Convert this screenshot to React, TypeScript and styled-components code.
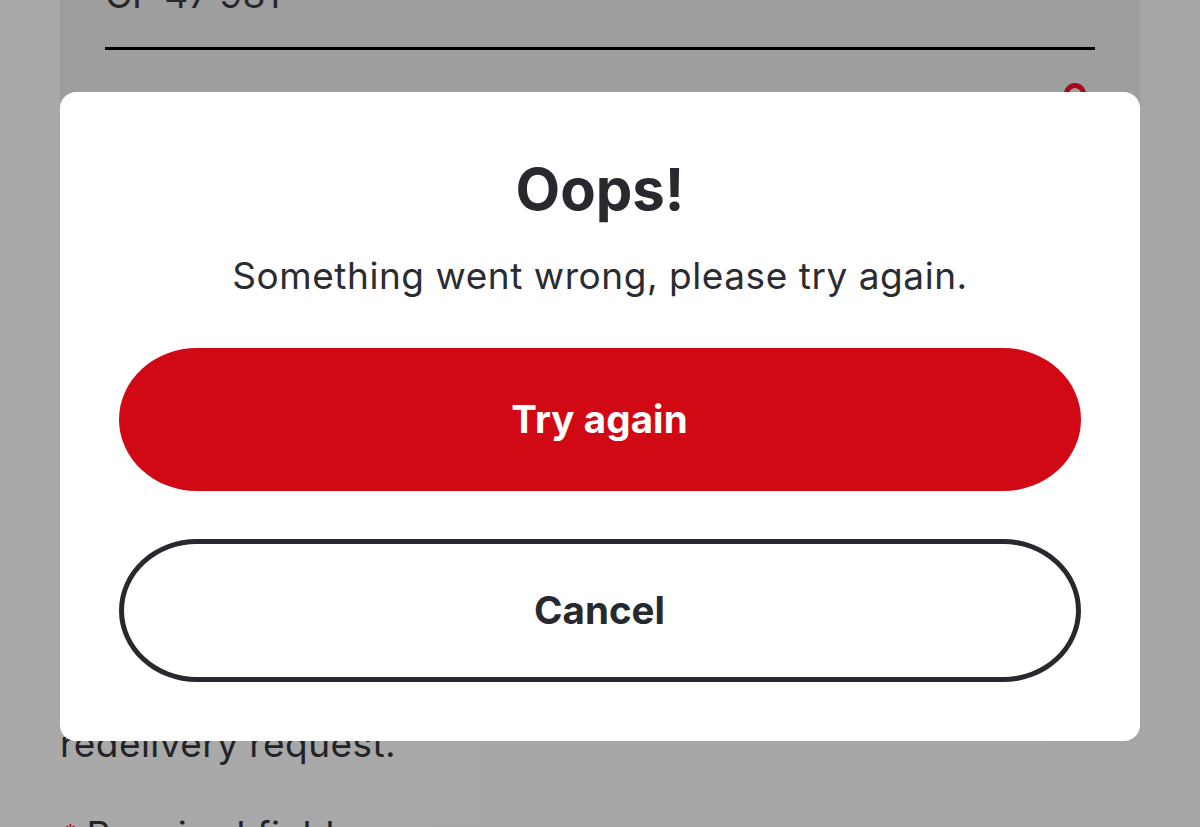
import React from "react";
import styled, { createGlobalStyle } from "styled-components";

const Global = createGlobalStyle`
  html, body { margin: 0; padding: 0; background: #a6a6a6; }
  * { box-sizing: border-box; }
`;

const Page = styled.div`
  position: relative;
  width: 1200px;
  height: 827px;
  overflow: hidden;
  background: linear-gradient(90deg, #a9a9a9 0%, #a6a6a6 100%);
  font-family: Inter, "Liberation Sans", sans-serif;
  color: #26272c;
`;

const Backdrop = styled.div`
  display: flex;
  flex-direction: column;
  margin-top: -30px;
  padding: 0 60px;
`;

const Panel = styled.section`
  height: 750px;
  padding: 0 45px;
  background: #9e9e9e;
`;

const RefNumber = styled.div`
  height: 80px;
  font-size: 37px;
  line-height: 50px;
  color: #27282c;
  border-bottom: 3px solid #000;
`;

const PinRow = styled.div`
  display: flex;
  justify-content: flex-end;
  padding: 30px 6px 0 0;
`;

const Note = styled.p`
  margin: 2px 0 0;
  font-size: 37px;
  line-height: 44px;
  letter-spacing: 0.45px;
  color: #222327;
`;

const Required = styled.p`
  margin: 47px 0 0 5px;
  font-size: 37px;
  line-height: 44px;
  letter-spacing: 0.45px;
  color: #222327;
`;

const Star = styled.span`
  color: #a00a18;
  font-size: 22px;
  line-height: 0;
  vertical-align: 8px;
  margin-right: 10px;
`;

const Modal = styled.div`
  position: absolute;
  left: 60px;
  top: 92px;
  width: 1080px;
  height: 649px;
  padding: 62px 59px 0;
  display: flex;
  flex-direction: column;
  align-items: center;
  background: #fff;
  border-radius: 16px;
`;

const Title = styled.h1`
  margin: 0;
  font-size: 58px;
  line-height: 70px;
  font-weight: 700;
  color: #28292e;
`;

const Message = styled.p`
  margin: 30px 0 0;
  font-size: 37px;
  line-height: 44px;
  font-weight: 400;
  letter-spacing: 0.55px;
  color: #2b2c31;
`;

const Button = styled.button<{ $primary?: boolean }>`
  width: 962px;
  height: 143px;
  flex: none;
  margin-top: ${(p) => (p.$primary ? "50px" : "48px")};
  border: ${(p) => (p.$primary ? "none" : "5px solid #28292e")};
  border-radius: 78px / 71.5px;
  background: ${(p) => (p.$primary ? "#d10915" : "#fff")};
  color: ${(p) => (p.$primary ? "#fff" : "#28292e")};
  font-family: inherit;
  font-size: 38.5px;
  font-weight: 700;
  letter-spacing: ${(p) => (p.$primary ? "0.1px" : "0")};
  padding: 0 1px 2px 0;
`;

export default function App() {
  return (
    <Page>
      <Global />
      <Backdrop>
        <Panel>
          <RefNumber>CF 47 981</RefNumber>
          <PinRow>
            <svg width="28" height="40" viewBox="0 0 28 40" fill="none">
              <circle cx="14" cy="14" r="8.5" stroke="#a50b1c" strokeWidth="5" />
            </svg>
          </PinRow>
        </Panel>
        <Note>redelivery request.</Note>
        <Required>
          <Star>*</Star>Required fields
        </Required>
      </Backdrop>
      <Modal>
        <Title>Oops!</Title>
        <Message>Something went wrong, please try again.</Message>
        <Button $primary>Try again</Button>
        <Button>Cancel</Button>
      </Modal>
    </Page>
  );
}
